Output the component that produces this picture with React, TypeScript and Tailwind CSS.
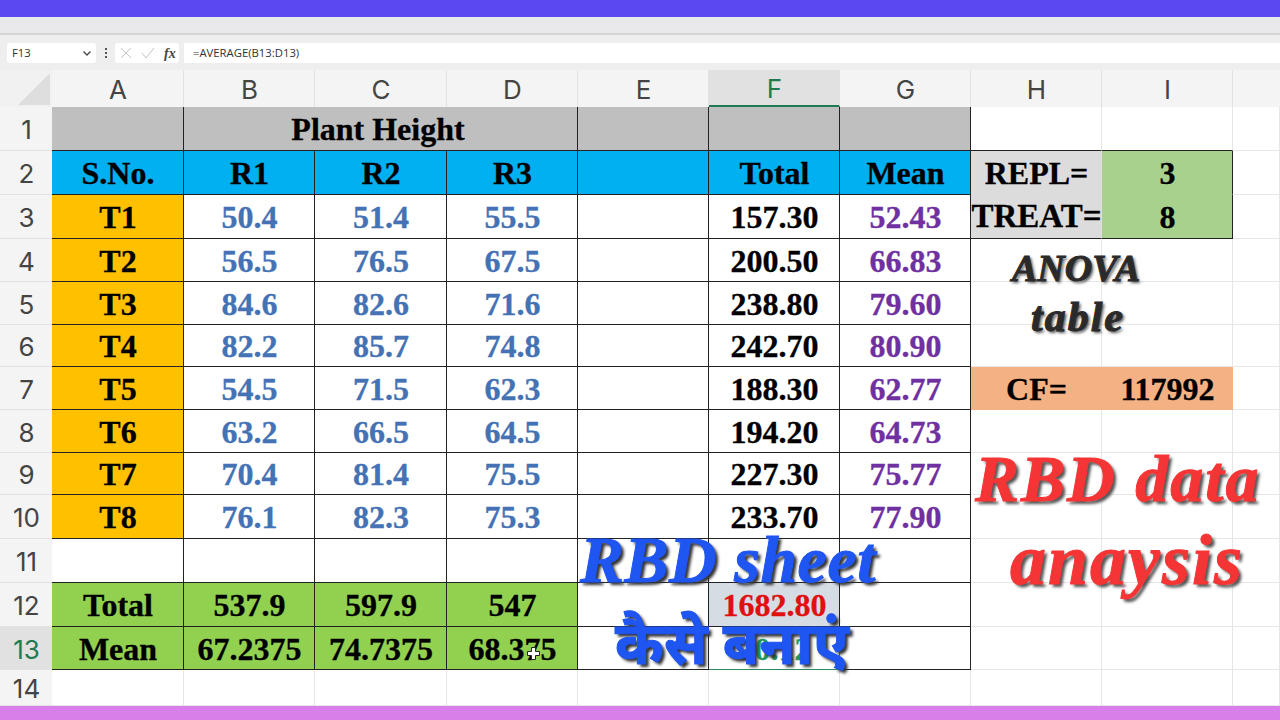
const rows = [
  ["T1", "50.4", "51.4", "55.5", "157.30", "52.43"],
  ["T2", "56.5", "76.5", "67.5", "200.50", "66.83"],
  ["T3", "84.6", "82.6", "71.6", "238.80", "79.60"],
  ["T4", "82.2", "85.7", "74.8", "242.70", "80.90"],
  ["T5", "54.5", "71.5", "62.3", "188.30", "62.77"],
  ["T6", "63.2", "66.5", "64.5", "194.20", "64.73"],
  ["T7", "70.4", "81.4", "75.5", "227.30", "75.77"],
  ["T8", "76.1", "82.3", "75.3", "233.70", "77.90"],
];

const cols = ["A", "B", "C", "D", "E", "F", "G", "H", "I"];

function RowHead({ n, active }: { n: number; active?: boolean }) {
  return (
    <div
      className={`flex items-center justify-center border-b border-[#e2e2e2] pt-[2px] pl-[1px] font-[Inter,sans-serif] text-[26px] font-normal ${
        active ? "bg-[#e1e1e1] text-[#1f7a52]" : "bg-[#f4f4f4] text-[#444444]"
      }`}
    >
      {n}
    </div>
  );
}

function Cell({ className = "", children }: { className?: string; children?: React.ReactNode }) {
  return (
    <div className={`flex items-center justify-center whitespace-nowrap border-r border-b pt-[1px] pl-[1px] [-webkit-text-stroke:0.3px] ${className}`}>
      {children}
    </div>
  );
}

const line = "border-[#222222]";
const blank = "border-[#e6e6e6]";

export default function App() {
  return (
    <div className="relative flex h-[720px] w-[1280px] flex-col overflow-hidden bg-white font-['Liberation_Serif',serif] font-bold">
      <div className="h-[17px] bg-[#5b48f0]" />
      <div className="h-[18px] border-b-2 border-[#d4d4d6] bg-[#e9e9eb]" />
      {/* formula bar */}
      <div className="flex h-[35px] items-center gap-[3px] bg-[#eeeeef] pl-[7px] pt-[1px] font-['Open_Sans',sans-serif] text-[11.3px] font-normal text-[#333333]">
        <div className="flex h-[20px] w-[89px] items-center justify-between rounded-[3px] bg-white pl-[5px] pr-[4px]">
          <span>F13</span>
          <svg width="10" height="10" viewBox="0 0 10 10" fill="none" stroke="#444" strokeWidth="1.3">
            <path d="M1.5 3.5 5 7l3.5-3.5" />
          </svg>
        </div>
        <div className="flex w-[13px] flex-col items-center gap-[2px]">
          <span className="h-[2px] w-[2px] bg-[#555]" />
          <span className="h-[2px] w-[2px] bg-[#555]" />
          <span className="h-[2px] w-[2px] bg-[#555]" />
        </div>
        <div className="flex h-[20px] w-[64px] items-center gap-[9px] rounded-[3px] bg-white pl-[5px]">
          <svg width="12" height="12" viewBox="0 0 12 12" fill="none" stroke="#c4c4c4" strokeWidth="1">
            <path d="M1 1l10 10M11 1 1 11" />
          </svg>
          <svg width="14" height="12" viewBox="0 0 14 12" fill="none" stroke="#c4c4c4" strokeWidth="1">
            <path d="M1 6l4 5 8-10" />
          </svg>
          <span className="font-['Liberation_Serif',serif] text-[14px] font-bold italic text-[#444]">fx</span>
        </div>
        <div className="ml-[2px] flex h-[20px] flex-1 items-center bg-white pl-[9px]">=AVERAGE(B13:D13)</div>
      </div>

      {/* sheet */}
      <div className="grid flex-1 grid-cols-[52px_132px_131px_132px_131px_131px_131px_131px_131px_131px_47px] grid-rows-[37px_44px_44px_44px_43px_43px_42px_43px_43px_42px_44px_44px_44px_43px_36px]">
        <div className="flex items-end justify-end bg-[#f1f1f1] pb-[2px] pr-[2px]">
          <svg width="32" height="32" viewBox="0 0 32 32">
            <path d="M32 0v32H0z" fill="#dedede" />
          </svg>
        </div>
        {cols.map((c) => (
          <div
            key={c}
            className={`flex items-center justify-center border-r border-[#e2e2e2] pt-[2px] pl-[1px] font-[Inter,sans-serif] text-[26px] font-normal ${
              c === "F"
                ? "border-b-2 border-b-[#1f7a52] bg-[#e1e1e1] text-[#1f7a52]"
                : "bg-[#f4f4f4] text-[#444444]"
            }`}
          >
            {c}
          </div>
        ))}
        <div className="bg-[#f4f4f4]" />

        {/* row 1 */}
        <RowHead n={1} />
        <Cell className={`bg-[#bfbfbf] ${line}`} />
        <Cell className={`col-span-3 bg-[#bfbfbf] pr-[6px] text-[32px] text-black ${line}`}>Plant Height</Cell>
        <Cell className={`bg-[#bfbfbf] ${line}`} />
        <Cell className={`bg-[#bfbfbf] ${line}`} />
        <Cell className={`bg-[#bfbfbf] ${line}`} />
        <Cell className="border-r-[#e6e6e6] border-b-[#222222]" />
        <Cell className="border-r-[#e6e6e6] border-b-[#222222]" />
        <Cell className={blank} />

        {/* row 2 */}
        <RowHead n={2} />
        {["S.No.", "R1", "R2", "R3", "", "Total", "Mean"].map((t, i) => (
          <Cell key={i} className={`bg-[#00b0f0] text-[32px] text-black ${line}`}>{t}</Cell>
        ))}
        <Cell className="border-transparent bg-[#dcdcdc] text-[32px] text-black">REPL=</Cell>
        <Cell className="border-r-[#222222] border-b-transparent bg-[#a9d18e] text-[32px] text-black">3</Cell>
        <Cell className={blank} />

        {rows.map((r, i) => (
          <div key={r[0]} className="contents">
            <RowHead n={i + 3} />
            <Cell className={`bg-[#ffc000] text-[32px] text-black ${line}`}>{r[0]}</Cell>
            <Cell className={`text-[32px] text-[#4472b4] ${line}`}>{r[1]}</Cell>
            <Cell className={`text-[32px] text-[#4472b4] ${line}`}>{r[2]}</Cell>
            <Cell className={`text-[32px] text-[#4472b4] ${line}`}>{r[3]}</Cell>
            <Cell className={line} />
            <Cell className={`text-[32px] text-black ${line}`}>{r[4]}</Cell>
            <Cell className={`text-[32px] text-[#7030a0] ${line}`}>{r[5]}</Cell>
            {i === 0 && (
              <>
                <Cell className="border-b-[#222222] border-r-transparent bg-[#dcdcdc] text-[33px] text-black">TREAT=</Cell>
                <Cell className="border-[#222222] bg-[#a9d18e] text-[32px] text-black">8</Cell>
              </>
            )}
            {i === 4 && (
              <>
                <Cell className="border-transparent bg-[#f4b183] text-[32px] text-black">CF=</Cell>
                <Cell className="border-transparent bg-[#f4b183] text-[32px] text-black">117992</Cell>
              </>
            )}
            {i !== 0 && i !== 4 && (
              <>
                <Cell className={blank} />
                <Cell className={blank} />
              </>
            )}
            <Cell className={blank} />
          </div>
        ))}

        {/* row 11 */}
        <RowHead n={11} />
        {[0, 1, 2, 3, 4, 5, 6].map((k) => (
          <Cell key={k} className={line} />
        ))}
        <Cell className={blank} />
        <Cell className={blank} />
        <Cell className={blank} />

        {/* row 12 */}
        <RowHead n={12} />
        {["Total", "537.9", "597.9", "547"].map((t) => (
          <Cell key={t} className={`bg-[#92d050] text-[32px] text-black ${line}`}>{t}</Cell>
        ))}
        <Cell className={line} />
        <Cell className={`bg-[#d6dce4] text-[32px] text-[#e01010] ${line}`}>1682.80</Cell>
        <Cell className={line} />
        <Cell className={blank} />
        <Cell className={blank} />
        <Cell className={blank} />

        {/* row 13 */}
        <RowHead n={13} active />
        {["Mean", "67.2375", "74.7375", "68.375"].map((t) => (
          <Cell key={t} className={`bg-[#92d050] text-[32px] text-black ${line}`}>{t}</Cell>
        ))}
        <Cell className={line} />
        <Cell className="border-[#2f8a5f] text-[32px] text-[#1f9a5a]">70.12</Cell>
        <Cell className={line} />
        <Cell className={blank} />
        <Cell className={blank} />
        <Cell className={blank} />

        {/* row 14 */}
        <RowHead n={14} />
        {cols.map((c) => (
          <Cell key={c} className={blank} />
        ))}
        <Cell className={blank} />
      </div>

      <div className="h-[14px] bg-[#d97fe9]" />

      {/* text and cursor laid over the sheet */}
      <span className="absolute left-[1012px] top-[249px] text-[38px] italic leading-none text-[#2a2a2a] [-webkit-text-stroke:1px] [text-shadow:2px_2px_3px_#555]">ANOVA</span>
      <span className="absolute left-[1031px] top-[296px] text-[42px] italic leading-none tracking-[2px] text-[#2a2a2a] [-webkit-text-stroke:1px] [text-shadow:2px_2px_3px_#555]">table</span>
      <span className="absolute left-[975px] top-[446px] text-[66px] italic leading-none tracking-[2px] text-[#f53535] [-webkit-text-stroke:1px] [text-shadow:3px_3px_3px_#555]">RBD data</span>
      <span className="absolute left-[1010px] top-[524px] text-[72px] italic leading-none tracking-[2px] text-[#f53535] [-webkit-text-stroke:1px] [text-shadow:3px_3px_3px_#555]">anaysis</span>
      <span className="absolute left-[580px] top-[527px] text-[66px] italic leading-none tracking-[0.5px] text-[#1f55f0] [-webkit-text-stroke:1px] [text-shadow:3px_3px_3px_#333]">RBD sheet</span>
      <span className="absolute left-[615px] top-[612px] font-['Noto_Sans',sans-serif] text-[59px] leading-none text-[#1f55f0] [-webkit-text-stroke:1px] [text-shadow:3px_3px_3px_#333]">कैसे बनाएं</span>
      <svg className="absolute left-[527px] top-[647px]" width="13" height="13" viewBox="0 0 13 13">
        <path d="M4.5 0.5h4v4h4v4h-4v4h-4v-4h-4v-4h4z" fill="#fff" stroke="#222" />
      </svg>
    </div>
  );
}
